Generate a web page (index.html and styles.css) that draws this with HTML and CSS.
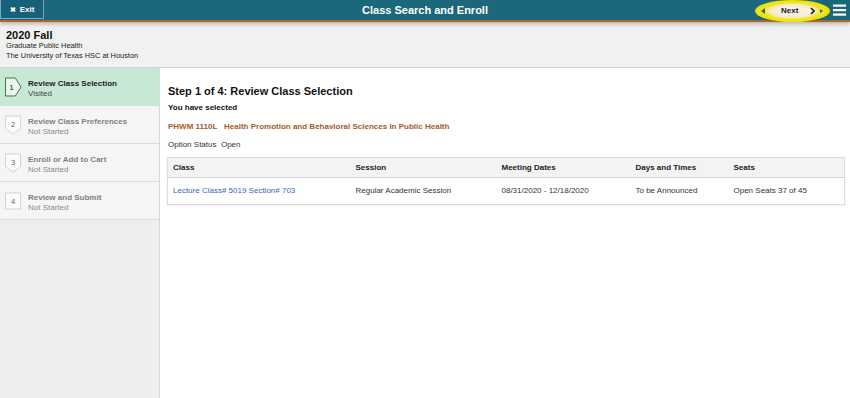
FILE: index.html
```html
<!DOCTYPE html>
<html lang="en">
  <head>
    <meta charset="UTF-8" />
    <title>Class Search and Enroll</title>
    <meta name="viewport" content="width=device-width, initial-scale=1.0" />
    <link rel="stylesheet" href="styles.css">
  </head>
  <body>
    <header class="banner">
      <div class="banner-left">
        <button class="exit-btn"><span class="exit-x">&#10006;</span> Exit</button>
      </div>
      <h1 class="banner-title">Class Search and Enroll</h1>
      <div class="banner-right">
        <div class="next-mark">
          <span class="tri tri-left"></span>
          <span class="next-label">Next</span>
          <svg class="chev" width="5" height="8" viewBox="0 0 5 8">
            <path d="M1 1 L4 4 L1 7" fill="none" stroke="#222" stroke-width="1.6" />
          </svg>
          <span class="tri tri-right"></span>
        </div>
        <svg class="menu" width="13" height="12" viewBox="0 0 13 12">
          <rect x="0" y="0.5" width="13" height="2.2" fill="#fff" />
          <rect x="0" y="5" width="13" height="2.2" fill="#fff" />
          <rect x="0" y="9.5" width="13" height="2.2" fill="#fff" />
        </svg>
      </div>
    </header>

    <section class="context">
      <div class="term">2020 Fall</div>
      <div class="context-line">Graduate Public Health</div>
      <div class="context-line">The University of Texas HSC at Houston</div>
    </section>

    <div class="layout">
      <nav class="steps">
        <div class="step step-current">
          <svg class="step-icon" width="18" height="20" viewBox="0 0 18 20">
            <polygon points="0.5,0.5 11,0.5 17,10 11,19.5 0.5,19.5" fill="#e9f6ee" stroke="#3f6a3c" />
            <text x="7" y="13.5" text-anchor="middle">1</text>
          </svg>
          <div class="step-text">
            <div class="step-title">Review Class Selection</div>
            <div class="step-status">Visited</div>
          </div>
        </div>
        <div class="step">
          <svg class="step-icon" width="18" height="20" viewBox="0 0 18 20">
            <polygon points="0.5,0.5 16.5,0.5 16.5,14 8.5,19.5 0.5,14" fill="#fbfbfb" stroke="#cfcfcf" />
            <text x="8.5" y="12" text-anchor="middle">2</text>
          </svg>
          <div class="step-text">
            <div class="step-title">Review Class Preferences</div>
            <div class="step-status">Not Started</div>
          </div>
        </div>
        <div class="step">
          <svg class="step-icon" width="18" height="20" viewBox="0 0 18 20">
            <polygon points="0.5,0.5 16.5,0.5 16.5,14 8.5,19.5 0.5,14" fill="#fbfbfb" stroke="#cfcfcf" />
            <text x="8.5" y="12" text-anchor="middle">3</text>
          </svg>
          <div class="step-text">
            <div class="step-title">Enroll or Add to Cart</div>
            <div class="step-status">Not Started</div>
          </div>
        </div>
        <div class="step">
          <svg class="step-icon" width="18" height="20" viewBox="0 0 18 20">
            <rect x="0.5" y="1.5" width="16" height="17" fill="#fbfbfb" stroke="#cfcfcf" />
            <text x="8.5" y="13" text-anchor="middle">4</text>
          </svg>
          <div class="step-text">
            <div class="step-title">Review and Submit</div>
            <div class="step-status">Not Started</div>
          </div>
        </div>
      </nav>

      <main class="content">
        <h2 class="page-title">Step 1 of 4: Review Class Selection</h2>
        <div class="selected-label">You have selected</div>
        <div class="course">PHWM 1110L&nbsp;&nbsp; Health Promotion and Behavioral Sciences in Public Health</div>
        <div class="option-status">Option Status&nbsp; Open</div>

        <table class="class-table">
          <colgroup>
            <col style="width: 183px" />
            <col style="width: 146px" />
            <col style="width: 134px" />
            <col style="width: 98px" />
            <col />
          </colgroup>
          <thead>
            <tr>
              <th>Class</th>
              <th>Session</th>
              <th>Meeting Dates</th>
              <th>Days and Times</th>
              <th>Seats</th>
            </tr>
          </thead>
          <tbody>
            <tr>
              <td><a href="#" class="class-link">Lecture Class# 5019 Section# 703</a></td>
              <td>Regular Academic Session</td>
              <td>08/31/2020 - 12/18/2020</td>
              <td>To be Announced</td>
              <td>Open Seats 37 of 45</td>
            </tr>
          </tbody>
        </table>
      </main>
    </div>
  </body>
</html>
```

FILE: styles.css
```css
html,
body {
  height: 100%;
}

body {
  margin: 0;
  font-family: 'Liberation Sans', Arial, sans-serif;
  font-size: 8px;
  color: #333;
  background: #fff;
  display: flex;
  flex-direction: column;
}

/* banner */

.banner {
  display: grid;
  grid-template-columns: 1fr auto 1fr;
  align-items: center;
  height: 20px;
  background: #1b687d;
  border-bottom: 2px solid #b5612c;
  box-shadow: 0 2px 4px rgba(0, 0, 0, 0.25);
  position: relative;
  z-index: 2;
}

.banner-left {
  display: flex;
  align-items: flex-start;
  height: 20px;
}

.exit-btn {
  width: 44px;
  height: 19px;
  padding: 0;
  background: #17617a;
  border: 1px solid #7fa8b5;
  border-top: none;
  color: #fff;
  font-family: inherit;
  font-size: 8px;
  font-weight: bold;
  cursor: pointer;
  text-align: center;
}

.exit-x {
  font-size: 7px;
  margin-right: 2px;
}

.banner-title {
  margin: 0;
  color: #fff;
  font-size: 11px;
  font-weight: bold;
  line-height: 20px;
}

.banner-right {
  display: flex;
  justify-content: flex-end;
  align-items: center;
  height: 20px;
}

.next-mark {
  display: flex;
  align-items: center;
  width: 75px;
  height: 22px;
  margin-top: 1px;
  margin-right: 3px;
  padding-left: 6px;
  box-sizing: border-box;
  border-radius: 50%;
  background: radial-gradient(
    ellipse closest-side,
    #f8eee2 40%,
    #f6ebbf 60%,
    #f2e424 76%,
    #efe100 100%
  );
}

.tri {
  width: 0;
  height: 0;
  border-top: 3px solid transparent;
  border-bottom: 3px solid transparent;
}

.tri-left {
  border-right: 4px solid #2f6a6c;
  margin-right: 16px;
}

.next-label {
  font-weight: bold;
  color: #222;
}

.chev {
  margin-left: 12px;
}

.tri-right {
  border-top-width: 2px;
  border-bottom-width: 2px;
  border-left: 3px solid #2f6a6c;
  margin-left: 5px;
}

.menu {
  margin-right: 4px;
}

/* context */

.context {
  height: 46px;
  padding: 7px 6px 0;
  box-sizing: border-box;
  background: #f1f1f1;
  border-bottom: 1px solid #d6d6d6;
  color: #222;
}

.term {
  font-size: 11px;
  font-weight: bold;
  line-height: 12px;
  color: #111;
}

.context-line {
  font-size: 7.4px;
  line-height: 10px;
}

/* layout */

.layout {
  flex: 1;
  display: flex;
  min-height: 0;
}

.steps {
  width: 159px;
  flex-shrink: 0;
  background: #eeeeee;
  border-right: 1px solid #d9d9d9;
}

.step {
  display: flex;
  align-items: flex-start;
  gap: 6px;
  height: 38px;
  padding: 9px 5px 0;
  box-sizing: border-box;
  background: #f5f5f5;
  border-bottom: 1px solid #dcdcdc;
}

.step-current {
  background: #c8e8d6;
  border-bottom-color: #c8e8d6;
}

.step-icon {
  flex-shrink: 0;
  width: 17px;
}

.step-icon text {
  font-family: 'Liberation Sans', Arial, sans-serif;
  font-size: 8px;
  fill: #666;
}

.step-current .step-icon text {
  fill: #111;
}

.step-text {
  margin-top: 2px;
}

.step-title {
  font-weight: bold;
  line-height: 10px;
  color: #808080;
}

.step-status {
  line-height: 9px;
  color: #8a8a8a;
}

.step-current .step-title {
  color: #1a1a1a;
}

.step-current .step-status {
  color: #444;
}

/* main */

.content {
  flex: 1;
  padding: 17px 5px 0 7px;
}

.page-title {
  margin: 0 0 0 1px;
  font-size: 11px;
  line-height: 13px;
  color: #111;
}

.selected-label {
  margin: 5px 0 0 1px;
  font-weight: bold;
  line-height: 10px;
  color: #111;
}

.course {
  margin: 9px 0 0 1px;
  font-weight: bold;
  line-height: 10px;
  color: #a65b2b;
}

.option-status {
  margin: 8px 0 0 1px;
  line-height: 10px;
}

.class-table {
  width: 678px;
  margin-top: 7px;
  border-collapse: collapse;
  table-layout: fixed;
  border: 1px solid #dcdcdc;
  box-shadow: 0 1px 2px rgba(0, 0, 0, 0.08);
}

.class-table th,
.class-table td {
  padding: 0 5px;
  text-align: left;
  line-height: 10px;
  white-space: nowrap;
}

.class-table th {
  height: 19px;
  background: #f3f3f3;
  border-bottom: 1px solid #d6d6d6;
  color: #222;
}

.class-table td {
  height: 26px;
  background: #fff;
}

.class-link {
  color: #3a64c4;
  text-decoration: none;
}
```
